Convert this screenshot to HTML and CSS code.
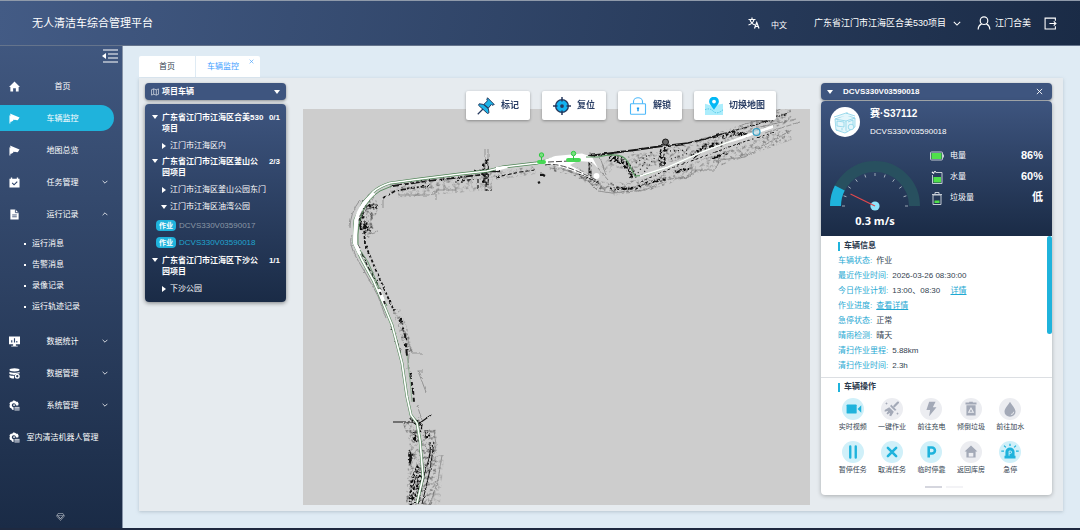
FILE: index.html
```html
<!DOCTYPE html>
<html lang="zh-CN">
<head>
<meta charset="utf-8">
<meta name="viewport" content="width=device-width, initial-scale=1">
<title>无人清洁车综合管理平台</title>
<link rel="stylesheet" href="styles.css">
</head>
<body>
<svg class="defs" aria-hidden="true">
  <symbol id="chev" viewBox="0 0 10 6"><path d="M1 1l4 4 4-4" fill="none" stroke="currentColor" stroke-width="1.3"/></symbol>
  <symbol id="cam" viewBox="0 0 24 24"><path d="M2 1l21 9-4 6-5-1z" fill="currentColor"/><path d="M1 5l10 6-2 6-4 2H3v4H1z" fill="currentColor"/><path d="M2 2l14 7-3 6-8-2z" fill="currentColor"/></symbol>
  <symbol id="gear" viewBox="0 0 24 24"><path d="M11 1l3 1 2 2 3 0 2 4-1 4h-5a4.500 4.500 0 1 0-5 4v6l-3-1-2-3-3-1-1-4 1-3-1-3 3-3 3 0 2-3z" fill="currentColor"/><circle cx="11" cy="11" r="2" fill="currentColor"/><path d="M12 15h11v8H12z" fill="currentColor" opacity=".8"/><path d="M12 18h11M12 21h11" stroke="#2c4268"/></symbol>
</svg>

<header class="topbar">
  <h1 class="brand">无人清洁车综合管理平台</h1>
  <div class="top-tools">
    <button class="tool lang" type="button">
      <svg class="lang-icon" viewBox="0 0 24 24" fill="none" stroke="currentColor" stroke-width="2.400"><path d="M1 5h14M8 1v4M4 5c1 5 5 9 10 11M12 5c-1 5-5 9-11 11"/><path d="M13 23l4.500-12L22 23M14.500 19h6"/></svg>
      <span class="lang-name">中文</span>
    </button>
    <label class="project">
      <select class="project-select" aria-label="项目"><option>广东省江门市江海区合美530项目</option></select>
      <svg class="chev-lg"><use href="#chev"/></svg>
    </label>
    <button class="tool" type="button">
      <svg class="user-icon" viewBox="0 0 24 24" fill="none" stroke="currentColor" stroke-width="2"><circle cx="12" cy="8" r="6.500"/><path d="M2 23c0-5 3-8 6-9.500M22 23c0-5-3-8-6-9.500"/></svg>
      <span>江门合美</span>
    </button>
    <button class="tool" type="button" aria-label="退出">
      <svg class="exit-icon" viewBox="0 0 24 24" fill="none" stroke="currentColor" stroke-width="2"><path d="M21 7V2H2v20h19v-5M10 12h12M18 8l4 4-4 4"/></svg>
    </button>
  </div>
</header>

<div class="body">
  <nav class="sidebar">
    <button class="fold" type="button" aria-label="收起菜单">
      <svg class="fold-icon" viewBox="0 0 16 14"><path d="M1 1h15M6 5h10M6 9h10M1 13h15" stroke="currentColor" stroke-width="1.200"/><path d="M0 7l4-3v6z" fill="currentColor"/></svg>
    </button>
    <ul class="menu">
      <li><a class="item" href="#home"><svg class="ico" viewBox="0 0 24 24"><path d="M12 1L0 13h3v10h6v-7h6v7h6V13h3z" fill="currentColor"/></svg><span>首页</span></a></li>
      <li><a class="item active" href="#monitor"><svg class="ico"><use href="#cam"/></svg><span>车辆监控</span></a></li>
      <li><a class="item" href="#map"><svg class="ico"><use href="#cam"/></svg><span>地图总览</span></a></li>
      <li><button class="item" type="button"><svg class="ico" viewBox="0 0 24 24"><path d="M1 4h3V1h3v3h10V1h3v3h3v19H1z" fill="currentColor"/><path d="M7 13l4 4 7-7" fill="none" stroke="#2c4268" stroke-width="2.500"/></svg><span>任务管理</span><svg class="chev"><use href="#chev"/></svg></button></li>
      <li><button class="item" type="button"><svg class="ico" viewBox="0 0 24 24"><path d="M3 1h11l7 7v15H3z" fill="currentColor"/><path d="M14 1v7h7M7 13h10M7 17h10" fill="none" stroke="#2c4268" stroke-width="1.800"/></svg><span>运行记录</span><svg class="chev up"><use href="#chev"/></svg></button>
        <ul class="submenu">
          <li><a href="#m1">运行消息</a></li>
          <li><a href="#m2">告警消息</a></li>
          <li><a href="#m3">录像记录</a></li>
          <li><a href="#m4">运行轨迹记录</a></li>
        </ul>
      </li>
      <li><button class="item" type="button"><svg class="ico" viewBox="0 0 24 24"><path d="M0 1h24v17H0zM9 18h6v3h4v2H5v-2h4z" fill="currentColor"/><path d="M6 14V9M12 14V5M17 14v-3" stroke="#2c4268" stroke-width="2.500"/></svg><span>数据统计</span><svg class="chev"><use href="#chev"/></svg></button></li>
      <li><button class="item" type="button"><svg class="ico" viewBox="0 0 24 24"><ellipse cx="12" cy="4" rx="11" ry="3.500" fill="currentColor"/><path d="M1 8c3 3 19 3 22 0v4c-6-1-9 1-11 3-5 0-9-1-11-2zM1 15c3 2 6 2 10 2v6c-5 0-8-1-10-3z" fill="currentColor"/><circle cx="18" cy="18" r="4" fill="none" stroke="currentColor" stroke-width="3"/></svg><span>数据管理</span><svg class="chev"><use href="#chev"/></svg></button></li>
      <li><button class="item" type="button"><svg class="ico"><use href="#gear"/></svg><span>系统管理</span><svg class="chev"><use href="#chev"/></svg></button></li>
      <li><a class="item" href="#indoor"><svg class="ico"><use href="#gear"/></svg><span>室内清洁机器人管理</span></a></li>
    </ul>
    <svg class="gem" viewBox="0 0 18 16" fill="none" stroke="currentColor"><path d="M4 1h10l3 5-8 9-8-9z"/><path d="M2 4.500c4 1 10 1 14 0M5 7l4 4 4-4M3 5l6 7 6-7"/></svg>
  </nav>

  <main class="content">
    <div class="tabs">
      <button class="tab" type="button">首页</button>
      <button class="tab current" type="button">车辆监控<svg class="tab-close" viewBox="0 0 8 8"><path d="M1 1l6 6M7 1L1 7" stroke="currentColor"/></svg></button>
    </div>

    <div class="panel">
      <section class="fleet">
        <button class="bar" type="button">
          <svg class="map-icon" viewBox="0 0 18 16" fill="none" stroke="currentColor" stroke-width="1.300"><path d="M1 3l5-2 6 2 5-2v12l-5 2-6-2-5 2zM6 1v12M12 3v12"/></svg>
          <span class="bar-title">项目车辆</span><i class="caret"></i>
        </button>
        <ul class="tree">
          <li>
            <button class="node" type="button"><i class="caret"></i><b>广东省江门市江海区合美530项目</b><b class="count">0/1</b></button>
            <button class="leaf" type="button"><i class="caret right"></i>江门市江海区内</button>
          </li>
          <li>
            <button class="node" type="button"><i class="caret"></i><b>广东省江门市江海区釜山公园项目</b><b class="count">2/3</b></button>
            <button class="leaf" type="button"><i class="caret right"></i>江门市江海区釜山公园东门</button>
            <button class="leaf" type="button"><i class="caret"></i>江门市江海区油湾公园</button>
            <ul class="cars">
              <li><a class="car" href="#c17"><span class="tag">作业</span>DCVS330V03590017</a></li>
              <li><a class="car selected" href="#c18"><span class="tag">作业</span>DCVS330V03590018</a></li>
            </ul>
          </li>
          <li>
            <button class="node" type="button"><i class="caret"></i><b>广东省江门市江海区下沙公园项目</b><b class="count">1/1</b></button>
            <button class="leaf" type="button"><i class="caret right"></i>下沙公园</button>
          </li>
        </ul>
      </section>

      <section class="stage">
        <div class="map-tools">
          <button class="map-btn" type="button"><svg class="map-btn-icon" viewBox="0 0 24 24"><path d="M14 1l9 9-3 1-1-1-4 5 1 6-2 1L2 11l1-2 6 1 5-5-1-1z" fill="#1cb4e8" stroke="#26395e" stroke-width="1.300"/><path d="M8 16l-7 7M9 10l6 5" stroke="#26395e" stroke-width="1.600"/></svg>标记</button>
          <button class="map-btn" type="button"><svg class="map-btn-icon" viewBox="0 0 24 24"><circle cx="12" cy="12" r="8.500" fill="#12b2f0" stroke="#26395e" stroke-width="1.800"/><circle cx="12" cy="12" r="2.500" fill="#26395e"/><path d="M12 0v6M12 18v6M0 12h6M18 12h6" stroke="#26395e" stroke-width="2"/></svg>复位</button>
          <button class="map-btn" type="button"><svg class="map-btn-icon" viewBox="0 0 24 24" fill="none" stroke="#4eb9fa" stroke-width="1.500"><rect x="2" y="9" width="20" height="14" rx="1"/><path d="M6 9V6a6 5 0 0 1 12 0v3"/><path d="M12 14v5M10.500 15h3" stroke="#1a9cf0" stroke-width="2"/></svg>解锁</button>
          <button class="map-btn" type="button"><svg class="map-btn-icon" viewBox="0 0 24 24"><path d="M0 9l7 2 5 3 6-4 6-1v15H0z" fill="#abedfc"/><path d="M0 17q6-3 11 2t13-2" fill="none" stroke="#30b9dd" stroke-dasharray="2 1.500"/><path d="M12 17C8 11 5.500 9 5.500 6a6.500 6.500 0 0 1 13 0c0 3-2.500 5-6.500 11z" fill="#03b8f5"/><circle cx="12" cy="6" r="2.500" fill="#fff"/></svg>切换地图</button>
        </div>
        <svg class="map" viewBox="303 109 507 396" preserveAspectRatio="xMidYMid slice" role="img" aria-label="作业地图">
          <defs>
            <filter id="grit" x="303" y="109" width="507" height="396" filterUnits="userSpaceOnUse">
              <feTurbulence type="fractalNoise" baseFrequency=".42" numOctaves="2" seed="4"/>
              <feColorMatrix values="0 0 0 0 0  0 0 0 0 0  0 0 0 0 0  5 0 0 0 -2.100" result="n"/>
              <feComposite in="SourceGraphic" in2="n" operator="in"/>
            </filter>
            <filter id="dust" x="303" y="109" width="507" height="396" filterUnits="userSpaceOnUse">
              <feTurbulence type="fractalNoise" baseFrequency=".3" numOctaves="3" seed="11"/>
              <feColorMatrix values="0 0 0 0 0  0 0 0 0 0  0 0 0 0 0  3 0 0 0 -1.400" result="n"/>
              <feComposite in="SourceGraphic" in2="n" operator="in"/>
            </filter>
            <filter id="rough" x="303" y="109" width="507" height="396" filterUnits="userSpaceOnUse" color-interpolation-filters="sRGB">
              <feTurbulence type="fractalNoise" baseFrequency=".25" numOctaves="2" seed="3" result="t"/>
              <feDisplacementMap in="SourceGraphic" in2="t" scale="3" xChannelSelector="R" yChannelSelector="G"/>
            </filter>
          </defs>
          <!-- scan dust around the roads -->
          <g fill="none" stroke="#5a5a5a" filter="url(#dust)">
            <path d="M390 188L440 183 488 177 535 170" stroke-width="8" opacity=".5"/>
            <path d="M550 166L575 171 600 186 625 188" stroke-width="9" opacity=".8"/>
            <path d="M398 193L425 191 460 188 492 185" stroke-width="9" opacity=".4"/>
            <path d="M366 197Q378 210 362 220Q368 230 372 232" stroke-width="13"/>
            <path d="M605 170L612 162 626 164" stroke-width="10" opacity=".4"/>
            <path d="M628 162L660 158 700 146 735 134 792 114" stroke-width="14" opacity=".6"/>
            <path d="M610 190L650 184 690 170 735 154 790 134" stroke-width="12" opacity=".6"/>
            <path d="M411 420L419 440 417 465 415 505" stroke-width="18" opacity=".8"/>
            <path d="M430 430L432 465 426 505" stroke-width="12" opacity=".7"/>
            <path d="M440 455L436 505" stroke-width="8" opacity=".3"/>
            <path d="M396 310L402 325 409 352" stroke-width="8" opacity=".8"/>
          </g>
          <!-- heavy walls -->
          <g fill="none" stroke="#111" filter="url(#grit)">
            <path d="M367 203Q359 213 362 225L363 230" stroke-width="6"/>
            <path d="M366 204L378 207M364 222L370 232" stroke-width="4"/>
            <path d="M487 158V185M484 162V183" stroke-width="4"/>
            <path d="M609 158Q621 157 627 166Q632 171 633 178" stroke-width="7"/>
            <path d="M665 147Q660 158 663 166" stroke-width="7"/>
            <path d="M722 137L734 133 747 135" stroke-width="5"/>
            <path d="M692 157L706 146 723 144" stroke-width="5"/>
            <path d="M590 162V177" stroke-width="3"/>
            <path d="M610 189L636 188 650 182 666 179M675 172L690 168M712 158L728 153" stroke-width="3"/>
            <path d="M410 418L420 425 419 432M427 430L428 438M414 432L416 442" stroke-width="5"/>
            <path d="M411 452L410 463M419 466L413 480 411 505M421 470L416 503" stroke-width="5"/>
          </g>
          <!-- wall lines -->
          <g fill="none" stroke="#161616" filter="url(#rough)">
            <path d="M474 171H500" stroke-width="2.500"/>
            <path d="M383 198L395 191 410 188 430 186" stroke-width="1.800" stroke-dasharray="4 2 2 2"/>
            <path d="M393 186L420 182 445 179 487 174" stroke-width="1.800" stroke-dasharray="9 2 5 2"/>
            <path d="M455 182L474 179M478 179V188M486 183V190H492M496 177L520 172 535 170" stroke-width="1.200" stroke-dasharray="4 2"/>
            <path d="M364 226L365 244 375 268 386 293 394 311" stroke-width="1.800" stroke-dasharray="3 2"/>
            <path d="M358 245L368 267 381 290" stroke-width="1.200" stroke-dasharray="6 2"/>
            <path d="M588 156L605 154 635 150 662 146" stroke-width="2"/>
            <path d="M662 146L688 143 705 139 722 134" stroke-width="1.400"/>
            <path d="M722 134L755 125 788 113" stroke-width="1.100" stroke-dasharray="5 2"/>
            <path d="M560 165L575 171 600 184" stroke-width="1.100" stroke-dasharray="3 1"/>
            <path d="M640 182L672 168 705 156 740 143 775 132" stroke-width="1" stroke-dasharray="3 2"/>
            <path d="M400 318L405 335 407 356M410 372L413 390 414 402M391 324L400 352" stroke-width="2" stroke-dasharray="7 3 4 2"/>
            <path d="M393 422H415M417 425L431 415M409 450Q413 456 410 464M430 442Q431 449 429 458" stroke-width="1.200"/>
            <path d="M430 455L424 476 418 504M434 442L430 470 422 504" stroke-width="1"/>
            <path d="M540 175h3l2 1M538 183l2-1" stroke-width="2.500"/>
          </g>
          <g fill="none" stroke="#6d6d6d" stroke-width=".600" filter="url(#rough)">
            <path d="M383 199V209M398 195H430L436 190H456M436 191V200M456 188V193M485 149V190M488 149V188M364 235L378 231"/>
            <path d="M550 168Q580 169 598 191L612 193 645 190 670 179 690 177 692 170 715 170 720 160 745 157 775 139 792 130"/>
            <path d="M590 152V180M598 168L608 180M600 157L606 175"/>
            <path d="M405 330L412 353H422M418 371L426 392M418 371H423M409 353L408 370"/>
            <path d="M352 235Q348 243 356 257L366 274 378 296 386 318M350 228Q350 213 360 200"/>
            <path d="M417 405L422 420M434 430L436 445 430 470M442 455L438 480 430 505"/>
            <path d="M738 126L760 120 782 108M760 127L796 119M765 133L800 122"/>
          </g>
          <g fill="none" stroke="#222" stroke-width="1.300" stroke-dasharray="1 3">
            <path d="M638 173L652 151M642 175L656 156M636 163L648 155M670 151L690 150M671 159L689 153"/>
          </g>
          <circle cx="665.500" cy="142" r="3" fill="#666" stroke="#111"/>
          <!-- driven surface -->
          <path d="M417 503L423 477 420 440 417 423 411 415 407 397 402 363 392 325 383 303 373 280 362 260 354 243 355 220 363 203 373 192Q380 186 390 183L420 179 460 174 487 171 503 167 537 163 555 158" fill="none" stroke="#4e8555" stroke-width="2.800"/>
          <path d="M417 503L423 477 420 440 417 423 411 415 407 397 402 363 392 325 383 303 373 280 362 260 354 243 355 220 363 203 373 192Q380 186 390 183L420 179 460 174 487 171 503 167 537 163 555 158" fill="none" stroke="#fff" stroke-width="1.700"/>
          <path d="M374 193L364 204Q357 212 356 224T355 243L360 254" fill="none" stroke="#fff" stroke-width="4"/>
          <path d="M358 245Q357 224 363 211T380 191L392 186" fill="none" stroke="#4e8555" stroke-width=".900"/>
          <path d="M360 250L368 262 378 285 387 306" fill="none" stroke="#4e8555" stroke-width=".800"/>
          <path d="M407 355L410 380 412 402" fill="none" stroke="#83a787" stroke-width=".800"/>
          <path d="M379 289L385 304" fill="none" stroke="#fff" stroke-width="3"/>
          <path d="M380 292l1 3M384 301l1 3" fill="none" stroke="#222" stroke-width="2"/>
          <path d="M533 164L555 156 582 153.500 592 157 598 168 592 162 578 161 570 165 598 181 570 170 550 164z" fill="#fff"/>
          <circle cx="596.500" cy="176" r="3" fill="#fff"/>
          <path d="M496 167l10-1 2 2-12 3z" fill="#fff"/>
          <path d="M586 157L598 157Q622 151 628 162Q631 169 635 176L645 175 668 167 702 152 742 137 773 126" fill="none" stroke="#5d9a64" stroke-width="1.200"/>
          <path d="M640 176L668 167 702 152 742 137" fill="none" stroke="#fff" stroke-width="1.500"/>
          <path d="M728 143L742 136 773 125 773 128 742 139z" fill="#fff"/>
          <path d="M548 162L570 161M545 165Q560 161 598 181" fill="none" stroke="#333" stroke-width=".900" stroke-dasharray="6 2"/>
          <!-- station pins and the vehicle -->
          <g fill="#47d755"><rect x="537" y="160" width="9" height="4" rx="2"/><rect x="566" y="158" width="15" height="4" rx="2"/></g>
          <g fill="#78e07e" stroke="#2ec740"><circle cx="541.500" cy="155" r="2.200"/><path d="M541.500 157v4"/><circle cx="573.500" cy="153.500" r="2.200"/><path d="M573.500 156v4"/></g>
          <circle cx="756.500" cy="132" r="3.500" fill="#9ec7d6" fill-opacity=".5" stroke="#2f9dc3" stroke-width="1.200"/>
        </svg>
      </section>

      <section class="detail">
        <div class="bar">
          <i class="caret"></i><b class="detail-id">DCVS330V03590018</b>
          <button class="close" type="button" aria-label="关闭"><svg class="close-icon" viewBox="0 0 8 8"><path d="M1 1l6 6M7 1L1 7" stroke="currentColor"/></svg></button>
        </div>
        <div class="card">
          <div class="summary">
            <div class="ident">
              <svg class="avatar" viewBox="0 0 30 30"><circle cx="15" cy="15" r="15" fill="#fff"/><g fill="#e4f6fb" stroke="#7dcfe5" stroke-width=".700"><path d="M5 12l11-4 9 3v9l-8 5-11-2z"/><path d="M5 12l11 2v11M16 14l9-3M7 14l7 1v5l-7-1zM4 10l12-4 9 3M18 15l5-2v5"/><circle cx="21" cy="20" r="2.800"/><path d="M6 23l9 3 3-2M17 5v2M12 23v-2"/></g></svg>
              <div><h2 class="name">赛·S37112</h2><p class="serial">DCVS330V03590018</p></div>
            </div>
            <div class="meters">
              <figure class="gauge">
                <svg class="dial" viewBox="0 0 92 52">
                  <path d="M6.500 46A39.500 39.500 0 0 1 85.500 46" fill="none" stroke="#28505f" stroke-width="11"/>
                  <path d="M6.500 46A39.500 39.500 0 0 1 10.800 28.100" fill="none" stroke="#1fb3dc" stroke-width="11"/>
                  <g stroke="#a9b3bf" stroke-width=".900"><path d="M13 46h3"/><path d="M13 46h3" transform="rotate(18 46 46)"/><path d="M13 46h3" transform="rotate(36 46 46)"/><path d="M13 46h3" transform="rotate(54 46 46)"/><path d="M13 46h3" transform="rotate(72 46 46)"/><path d="M13 46h3" transform="rotate(90 46 46)"/><path d="M13 46h3" transform="rotate(108 46 46)"/><path d="M13 46h3" transform="rotate(126 46 46)"/><path d="M13 46h3" transform="rotate(144 46 46)"/><path d="M13 46h3" transform="rotate(162 46 46)"/><path d="M13 46h3" transform="rotate(180 46 46)"/></g>
                  <circle cx="46" cy="46" r="4.600" fill="#90e3fb"/>
                  <path d="M46 46L21.500 34" stroke="#e2484d" stroke-width="1.200"/>
                </svg>
                <figcaption class="speed">0.3 m/s</figcaption>
              </figure>
              <dl class="levels">
                <div class="level"><svg class="level-icon" viewBox="0 0 14 14"><rect x=".500" y="3" width="12" height="8" rx="1" fill="none" stroke="#c4cbd4"/><rect x="1.500" y="4" width="10" height="6" fill="#4fe04a"/><path d="M13.500 5.500v3" stroke="#c4cbd4"/></svg><dt>电量</dt><dd>86%</dd></div>
                <div class="level"><svg class="level-icon" viewBox="0 0 14 14"><path d="M6 2.500h6v11H2.500V5" fill="none" stroke="#c4cbd4"/><rect x="3.500" y="7" width="7.500" height="5.500" fill="#4fe04a"/><path d="M2 2l2 1.500M5 1v1.500" stroke="#fff" stroke-width="1.500"/></svg><dt>水量</dt><dd>60%</dd></div>
                <div class="level"><svg class="level-icon" viewBox="0 0 14 14"><path d="M3 4h8v9.500H3zM2 3.500h10M5 3V1.500h4V3" fill="none" stroke="#c4cbd4"/><rect x="4.500" y="9.500" width="5" height="2.500" fill="#4fe04a"/></svg><dt>垃圾量</dt><dd>低</dd></div>
              </dl>
            </div>
          </div>

          <div class="info">
            <h3 class="heading">车辆信息</h3>
            <dl class="facts">
              <div><dt>车辆状态:</dt><dd>作业</dd></div>
              <div><dt>最近作业时间:</dt><dd>2026-03-26 08:30:00</dd></div>
              <div><dt>今日作业计划:</dt><dd>13:00、08:30 <a class="more" href="#plan">详情</a></dd></div>
              <div><dt>作业进度:</dt><dd><a href="#progress">查看详情</a></dd></div>
              <div><dt>急停状态:</dt><dd>正常</dd></div>
              <div><dt>晴雨检测:</dt><dd>晴天</dd></div>
              <div><dt>清扫作业里程:</dt><dd>5.88km</dd></div>
              <div><dt>清扫作业时间:</dt><dd>2.3h</dd></div>
            </dl>
            <i class="thumb"></i>
          </div>

          <div class="ops">
            <h3 class="heading">车辆操作</h3>
            <div class="op-grid">
              <button class="op on" type="button"><svg class="op-icon" viewBox="0 0 24 24"><rect x="5" y="7" width="11" height="10" rx="1" fill="currentColor"/><path d="M17 12l4-4v8z" fill="currentColor"/></svg>实时视频</button>
              <button class="op" type="button"><svg class="op-icon" viewBox="0 0 24 24"><path d="M18.500 5l-4 4" stroke="currentColor" stroke-width="2.400" stroke-linecap="round"/><path d="M11 7l6 6-2 1-5-5zM9 10l5 5-3 5-2-1 1-3-3 2-1-1 2-3-4 1v-2z" fill="currentColor"/><path d="M5 6h2M6 5v2M17 17h2M18 16v2" stroke="currentColor"/></svg>一键作业</button>
              <button class="op" type="button"><svg class="op-icon" viewBox="0 0 24 24"><path d="M10 4h7l-3 6h4l-8 10 1-7H7z" fill="currentColor"/></svg>前往充电</button>
              <button class="op" type="button"><svg class="op-icon" viewBox="0 0 24 24"><path d="M7 8h10v11H7zM6 5h12v2H6zM10 4h4v1h-4z" fill="currentColor"/><path d="M12 11l-2.500 4.500h5z" fill="none" stroke="#ecedf1" stroke-width="1.200"/></svg>倾倒垃圾</button>
              <button class="op" type="button"><svg class="op-icon" viewBox="0 0 24 24"><path d="M12 4c2 4 6 7 6 11a6 5.500 0 0 1-12 0c0-4 4-7 6-11z" fill="currentColor"/><path d="M13 18q3 0 3-3" fill="none" stroke="#ecedf1"/></svg>前往加水</button>
              <button class="op on" type="button"><svg class="op-icon" viewBox="0 0 24 24"><path d="M9 6v12M15 6v12" stroke="currentColor" stroke-width="2.600" stroke-linecap="round"/></svg>暂停任务</button>
              <button class="op on" type="button"><svg class="op-icon" viewBox="0 0 24 24"><path d="M7.500 7.500l9 9M16.500 7.500l-9 9" stroke="currentColor" stroke-width="2.800" stroke-linecap="round"/></svg>取消任务</button>
              <button class="op on" type="button"><svg class="op-icon" viewBox="0 0 24 24"><path d="M9.500 18V7H13a3.300 3.300 0 0 1 0 6.600H9.500" fill="none" stroke="currentColor" stroke-width="2.800"/></svg>临时停靠</button>
              <button class="op" type="button"><svg class="op-icon" viewBox="0 0 24 24"><path d="M12 5l7 6.500h-2V18H7v-6.500H5z" fill="currentColor"/><rect x="9.500" y="13" width="5" height="4" fill="#ecedf1"/></svg>返回库房</button>
              <button class="op on" type="button"><svg class="op-icon" viewBox="0 0 24 24"><path d="M7 16v-4a5 5 0 0 1 10 0v4h1v3H6v-3z" fill="currentColor"/><path d="M12 3v2.500M5.500 5l2 2M18.500 5l-2 2M2.500 11h3M18.500 11h3" stroke="currentColor" stroke-width="1.400"/><path d="M11 16v-5h1.500a1 1 0 0 1 0 2.500H11" fill="none" stroke="#d0f0f9"/></svg>急停</button>
            </div>
            <div class="pager"><button class="dot cur" type="button" aria-label="第1页"></button><button class="dot" type="button" aria-label="第2页"></button></div>
          </div>
        </div>
      </section>
    </div>
  </main>
</div>
<footer class="edge"></footer>
</body>
</html>
```

FILE: styles.css
```css
* { box-sizing: border-box; margin: 0; padding: 0; }
ul { list-style: none; }
button { border: 0; background: none; font: inherit; color: inherit; cursor: pointer; }
a { color: inherit; text-decoration: none; }
svg { display: block; flex: none; }
i { display: block; flex: none; }

body {
  min-height: 100vh;
  display: flex;
  flex-direction: column;
  font: 8px/11px "Liberation Sans", "Noto Sans CJK SC", sans-serif;
  background: #dfebf4;
  color: #333f50;
}
.defs { position: absolute; width: 0; height: 0; }

/* top bar */
.topbar {
  height: 46px;
  display: flex;
  align-items: center;
  justify-content: space-between;
  padding: 0 23px 0 32px;
  border-top: 1px solid #8f9aaa;
  border-bottom: 1px solid #65748c;
  background: linear-gradient(100deg, #435b85, #1a2b46);
  color: #fff;
}
.brand { font-size: 11px; line-height: 16px; font-weight: 400; }
.top-tools { display: flex; align-items: center; gap: 16px; font-size: 9px; }
.tool { display: flex; align-items: center; gap: 4px; }
.lang { gap: 11px; margin-right: 11px; }
.lang-icon { width: 12px; height: 12px; }
.lang-name { font-size: 8px; padding-top: 4px; }
.project { display: flex; align-items: center; gap: 6px; }
.project-select { appearance: none; border: 0; background: none; color: inherit; font: inherit; }
.project-select option { color: #333f50; }
.chev-lg { width: 8px; height: 5px; }
.user-icon { width: 14px; height: 14px; }
.exit-icon { width: 13px; height: 13px; margin-left: -3px; }

/* side menu */
.body { flex: 1; display: flex; }
.sidebar {
  width: 123px;
  display: flex;
  flex-direction: column;
  background: linear-gradient(#40577f, #1a2b46);
  border-right: 1px solid #8794a8;
  color: #fff;
}
.fold { align-self: flex-end; padding: 3px 4px 0 0; }
.fold-icon { width: 16px; height: 14px; }
.menu { width: 114px; padding-top: 10px; display: flex; flex-direction: column; gap: 6px; }
.item {
  width: 100%;
  height: 26px;
  display: grid;
  grid-template-columns: 11px 1fr 6px;
  gap: 5px;
  align-items: center;
  padding: 0 6px 0 9px;
  border-radius: 0 13px 13px 0;
  text-align: center;
  white-space: nowrap;
}
.item span { margin: 0 -3px 0 0; }
.item.active { background: #1fb3dc; }
.ico { width: 11px; height: 11px; }
.chev { width: 6px; height: 4px; }
.up { transform: rotate(180deg); }
.submenu { padding: 6px 0 5px 24px; line-height: 21px; }
.submenu li { display: flex; align-items: center; gap: 6px; }
.submenu li::before { content: ""; width: 2px; height: 2px; background: #fff; }
.gem { width: 9px; height: 8px; margin: auto auto 7px 56px; opacity: .8; }

/* page */
.content { flex: 1; min-width: 0; display: flex; flex-direction: column; padding: 10px 17px 17px 16px; }
.tabs { display: flex; gap: 1px; }
.tab { position: relative; width: 56px; height: 21px; background: #fff; border-radius: 2px 0 0 0; }
.tab.current { width: 64px; padding-right: 10px; border-radius: 0 2px 0 0; color: #409eff; }
.tab-close { position: absolute; top: 3px; right: 6px; width: 5px; height: 5px; }
.panel {
  flex: 1;
  display: grid;
  grid-template-columns: 141px 1fr 231px;
  margin-top: 1px;
  padding: 5px 11px 6px 6px;
  background: #e6ebef;
  box-shadow: 0 1px 3px #8fa0ad80;
}
.bar {
  width: 100%;
  height: 17px;
  display: flex;
  align-items: center;
  padding: 0 6px;
  border-radius: 4px;
  background: #3e557f;
  box-shadow: 0 1px 3px #0006;
  color: #fff;
  font-weight: 700;
}
.caret { border-style: solid; border-width: 4px 3px 0; border-color: #fff transparent transparent; }
.caret.right { border-width: 3px 1px 3px 4px; border-color: transparent transparent transparent #fff; }

/* fleet tree */
.map-icon { width: 8px; height: 8px; margin-right: 3px; }
.bar-title { margin-right: auto; }
.tree {
  margin-top: 4px;
  padding: 8px 6px 3px 7px;
  border-radius: 4px;
  background: linear-gradient(#3e557f, #1a2b46);
  box-shadow: 0 1px 4px #0007;
  color: #fff;
}
.node { width: 100%; display: grid; grid-template-columns: 6px 102px 1fr; column-gap: 4px; align-items: start; text-align: left; padding-bottom: 3px; }
.node .caret { margin-top: 3px; }
.count { text-align: right; margin-left: -6px; }
.leaf { display: flex; align-items: center; gap: 3px; height: 17px; padding-left: 9px; white-space: nowrap; }
.leaf .caret.right { margin-left: 1px; }
.tree > li { padding-bottom: 2px; }
.cars { padding: 2px 0 2px 4px; }
.car { display: flex; align-items: center; gap: 3px; height: 17px; color: #8a97a5; }
.car.selected { color: #1fa5cf; }
.tag { padding: 0 3px; border-radius: 4px; background: #1fb3dc; color: #fff; font-size: 7px; font-weight: 700; }

/* map */
.stage { position: relative; margin: 26px 11px 0 17px; background: #cdcdcd; }
.map { position: absolute; inset: 0; width: 100%; height: 100%; }
.map-tools { position: absolute; z-index: 1; top: -18px; right: 34px; display: flex; gap: 12px; }
.map-btn {
  height: 29px;
  display: flex;
  align-items: center;
  gap: 6px;
  padding: 0 11px;
  border-radius: 2px;
  background: #fff;
  box-shadow: 0 1px 3px #0005;
  color: #2b3f66;
  font-size: 9px;
  font-weight: 700;
  white-space: nowrap;
}
.map-btn-icon { width: 18px; height: 18px; }

/* vehicle card */
.detail-id { margin: 0 auto 0 10px; }
.detail { display: flex; flex-direction: column; }
.detail .bar { flex: none; }
.close { padding: 4px 3px; }
.close-icon { width: 7px; height: 7px; }
.card { margin-top: 1px; border-radius: 4px; background: #fff; box-shadow: 0 1px 4px #0004; }
.summary { padding: 6px 9px 6px; border-radius: 4px 4px 0 0; background: linear-gradient(#3e557f, #1a2b46); color: #fff; }
.ident { display: flex; gap: 10px; }
.avatar { width: 30px; height: 30px; }
.name { font-size: 10px; line-height: 14px; }
.serial { padding-top: 5px; }
.meters { display: flex; justify-content: space-between; padding-top: 8px; }
.gauge { width: 90px; margin-top: 15px; text-align: center; }
.dial { width: 92px; height: 52px; margin-left: -1px; }
.speed { font: 700 11px/18px "Open Sans", sans-serif; }
.levels { width: 113px; }
.level { display: grid; grid-template-columns: 14px 1fr auto; column-gap: 6px; align-items: center; height: 21px; }
.level-icon { width: 14px; height: 14px; }
.level dd { font-size: 11px; font-weight: 700; }

.info { position: relative; padding: 4px 17px 4px; border-bottom: 1px solid #dcdfe3; }
.heading { font-size: 8px; line-height: 12px; display: flex; align-items: center; gap: 4px; color: #2c3a4d; }
.heading::before { content: ""; width: 2px; height: 9px; background: #1fb3dc; }
.facts { padding-top: 1px; }
.facts div { display: flex; gap: 4px; line-height: 15px; }
.facts dt, .facts a { color: #1fa9d3; }
.facts a { text-decoration: underline; }
.more { margin-left: 8px; }
.thumb { position: absolute; top: 0; right: 0; width: 5px; height: 98px; border-radius: 3px; background: #1fb3dc; }

.ops { padding: 3px 22px 7px 12px; }
.ops .heading { padding-left: 5px; }
.op-grid { display: grid; grid-template-columns: repeat(5, 1fr); row-gap: 9px; padding-top: 5px; }
.op { display: flex; flex-direction: column; align-items: center; gap: 2px; font-size: 7px; line-height: 10px; white-space: nowrap; }
.op-icon { width: 22px; height: 22px; border-radius: 50%; background: #ecedf1; color: #a3a9b7; }
.op.on .op-icon { background: #d0f0f9; color: #1fb3dc; }
.pager { display: flex; justify-content: center; gap: 4px; padding: 11px 0 0 25px; }
.dot { width: 17px; height: 2px; background: #f3f3f6; }
.dot.cur { background: #d5d6de; }

.edge { height: 2px; background: #1e2940; }
```
